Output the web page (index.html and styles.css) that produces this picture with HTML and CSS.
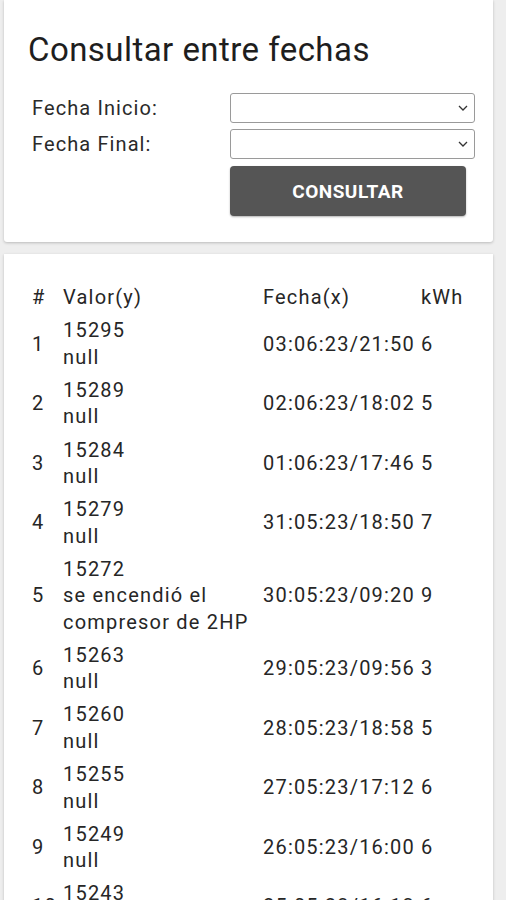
FILE: index.html
```html
<!DOCTYPE html>
<html lang="es">
<head>
<meta charset="utf-8">
<title>Consultar entre fechas</title>
<link rel="stylesheet" href="styles.css">
</head>
<body>
<main class="page">
  <section class="card card-form">
    <h1 class="title">Consultar entre fechas</h1>
    <form class="form">
      <label class="label" for="inicio">Fecha Inicio:</label>
      <div class="select-wrap">
        <select id="inicio" class="select"><option></option></select>
        <svg class="chev" viewBox="0 0 10 6" width="10" height="6"><path d="M1 1l4 4 4-4" fill="none" stroke="#333" stroke-width="1.3"/></svg>
      </div>
      <label class="label" for="final">Fecha Final:</label>
      <div class="select-wrap">
        <select id="final" class="select"><option></option></select>
        <svg class="chev" viewBox="0 0 10 6" width="10" height="6"><path d="M1 1l4 4 4-4" fill="none" stroke="#333" stroke-width="1.3"/></svg>
      </div>
      <span></span>
      <button type="button" class="btn">CONSULTAR</button>
    </form>
  </section>

  <section class="card card-table">
    <table class="tbl">
      <colgroup>
        <col class="c-num"><col class="c-val"><col class="c-date"><col class="c-kwh">
      </colgroup>
      <thead>
        <tr><th>#</th><th>Valor(y)</th><th>Fecha(x)</th><th>kWh</th></tr>
      </thead>
      <tbody>
        <tr><td>1</td><td>15295<br>null</td><td>03:06:23/21:50</td><td>6</td></tr>
        <tr><td>2</td><td>15289<br>null</td><td>02:06:23/18:02</td><td>5</td></tr>
        <tr><td>3</td><td>15284<br>null</td><td>01:06:23/17:46</td><td>5</td></tr>
        <tr><td>4</td><td>15279<br>null</td><td>31:05:23/18:50</td><td>7</td></tr>
        <tr><td>5</td><td>15272<br>se encendió el compresor de 2HP</td><td>30:05:23/09:20</td><td>9</td></tr>
        <tr><td>6</td><td>15263<br>null</td><td>29:05:23/09:56</td><td>3</td></tr>
        <tr><td>7</td><td>15260<br>null</td><td>28:05:23/18:58</td><td>5</td></tr>
        <tr><td>8</td><td>15255<br>null</td><td>27:05:23/17:12</td><td>6</td></tr>
        <tr><td>9</td><td>15249<br>null</td><td>26:05:23/16:00</td><td>6</td></tr>
        <tr><td>10</td><td>15243<br>null</td><td>25:05:23/16:13</td><td>6</td></tr>
        <tr><td>11</td><td>15238<br>null</td><td>24:05:23/17:40</td><td>5</td></tr>
      </tbody>
    </table>
  </section>
</main>
</body>
</html>
```
FILE: styles.css
```css
* { box-sizing: border-box; }
html, body { margin: 0; padding: 0; }
body {
  background: #eeeeee;
  font-family: Roboto, "Liberation Sans", sans-serif;
  color: #222;
}
.page {
  width: 489px;
  margin-left: 4px;
  display: flex;
  flex-direction: column;
  gap: 12px;
}
.card {
  background: #fff;
  box-shadow: 0 1px 3px rgba(0,0,0,0.22);
  border-radius: 0 0 3px 3px;
}
.card-form {
  padding: 30px 24px 26px 24px;
}
.title {
  margin: 0 0 23px 0;
  font-weight: 400;
  font-size: 33px;
  line-height: 40px;
  letter-spacing: 0.45px;
  color: #1e1e1e;
}
.form {
  display: grid;
  grid-template-columns: 202px 245px;
  row-gap: 6px;
  align-items: center;
}
.label {
  padding-left: 4px;
  font-size: 20px;
  letter-spacing: 1.1px;
  color: #2a2a2a;
}
.select-wrap {
  position: relative;
  height: 30px;
}
.select {
  appearance: none;
  -webkit-appearance: none;
  width: 100%;
  height: 100%;
  border: 1px solid #9a9a9a;
  border-radius: 3px;
  background: #fff;
  margin: 0;
}
.chev {
  position: absolute;
  right: 7px;
  top: 12px;
  pointer-events: none;
}
.btn {
  width: 236px;
  height: 50px;
  margin-top: 1px;
  border: none;
  border-radius: 4px;
  background: #555555;
  color: #fff;
  font-family: Roboto, "Liberation Sans", sans-serif;
  font-weight: 700;
  font-size: 19px;
  letter-spacing: 0.5px;
  box-shadow: 0 1px 2px rgba(0,0,0,0.3);
}
.card-table {
  padding: 27px 0 0 24px;
}
.tbl {
  width: 442px;
  table-layout: fixed;
  border-collapse: collapse;
  font-size: 20px;
  line-height: 26.5px;
  letter-spacing: 1.2px;
  color: #262626;
}
.c-num { width: 31px; }
.c-val { width: 200px; }
.c-date { width: 158px; }
.c-kwh { width: 53px; }
.tbl th, .tbl td {
  padding: 3.3px 0 3.3px 4px;
  text-align: left;
  vertical-align: middle;
  font-weight: 400;
}
```
